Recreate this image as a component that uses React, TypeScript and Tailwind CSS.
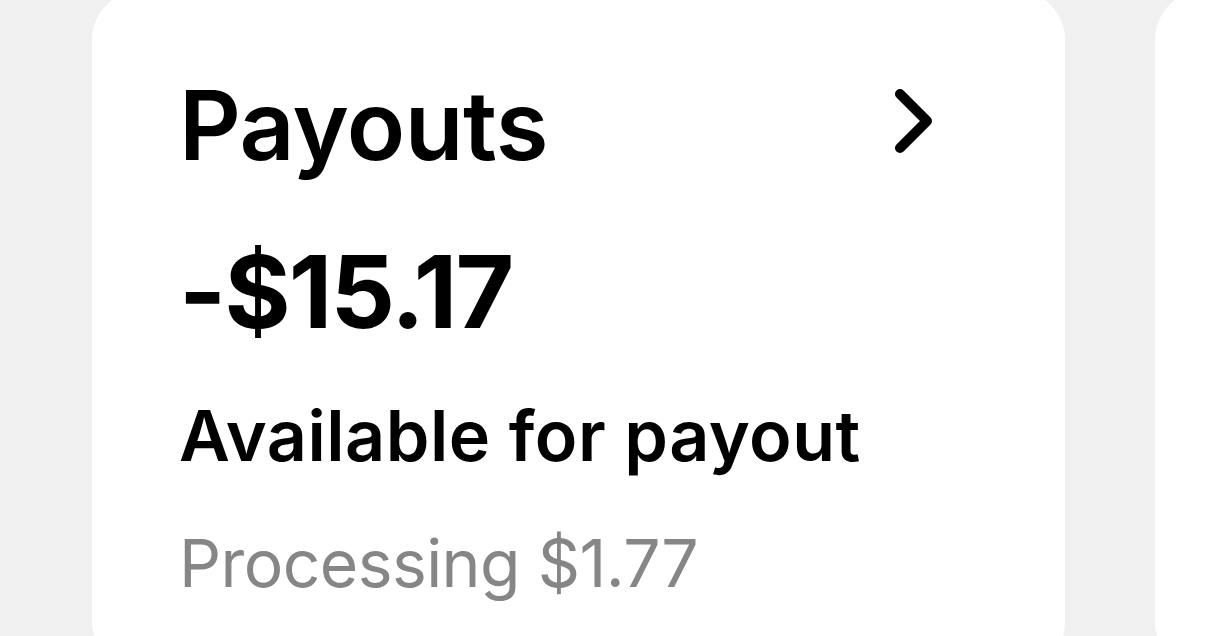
import { ReactNode } from 'react';

type CardProps = {
  children?: ReactNode;
};

const Card = ({ children }: CardProps) => (
  <div className="w-[973px] h-[682px] shrink-0 bg-white rounded-[50px] pl-[87px] pr-[131px]">
    {children}
  </div>
);

const Chevron = () => (
  <svg width="44" height="70" viewBox="0 0 44 70" fill="none" className="-mt-[8px]">
    <path d="M10 8 L37 35 L10 62" stroke="#000" strokeWidth="10" strokeLinecap="round" strokeLinejoin="round" />
  </svg>
);

export default function App() {
  return (
    <div
      className="w-[1206px] h-[636px] overflow-hidden bg-[#f0f0f0] text-black"
      style={{ fontFamily: 'Inter, "Noto Sans", sans-serif' }}
    >
      <div className="flex gap-[90px] pl-[92px] -mt-[10px]">
        <Card>
          {/* Header */}
          <div className="flex items-center justify-between pt-[87px]">
            <div className="text-[96px] font-semibold leading-none tracking-[-0.5px]">Payouts</div>
            <Chevron />
          </div>

          {/* Balance */}
          <div className="mt-[68px] text-[101px] font-bold leading-none tracking-[-1.8px]">-$15.17</div>
          <div className="mt-[59px] text-[70px] font-semibold leading-none tracking-[0.5px]">Available for payout</div>
          <div className="mt-[59px] text-[66px] leading-none tracking-[-0.6px] text-[#868686]">Processing $1.77</div>
        </Card>
        <Card />
      </div>
    </div>
  );
}
